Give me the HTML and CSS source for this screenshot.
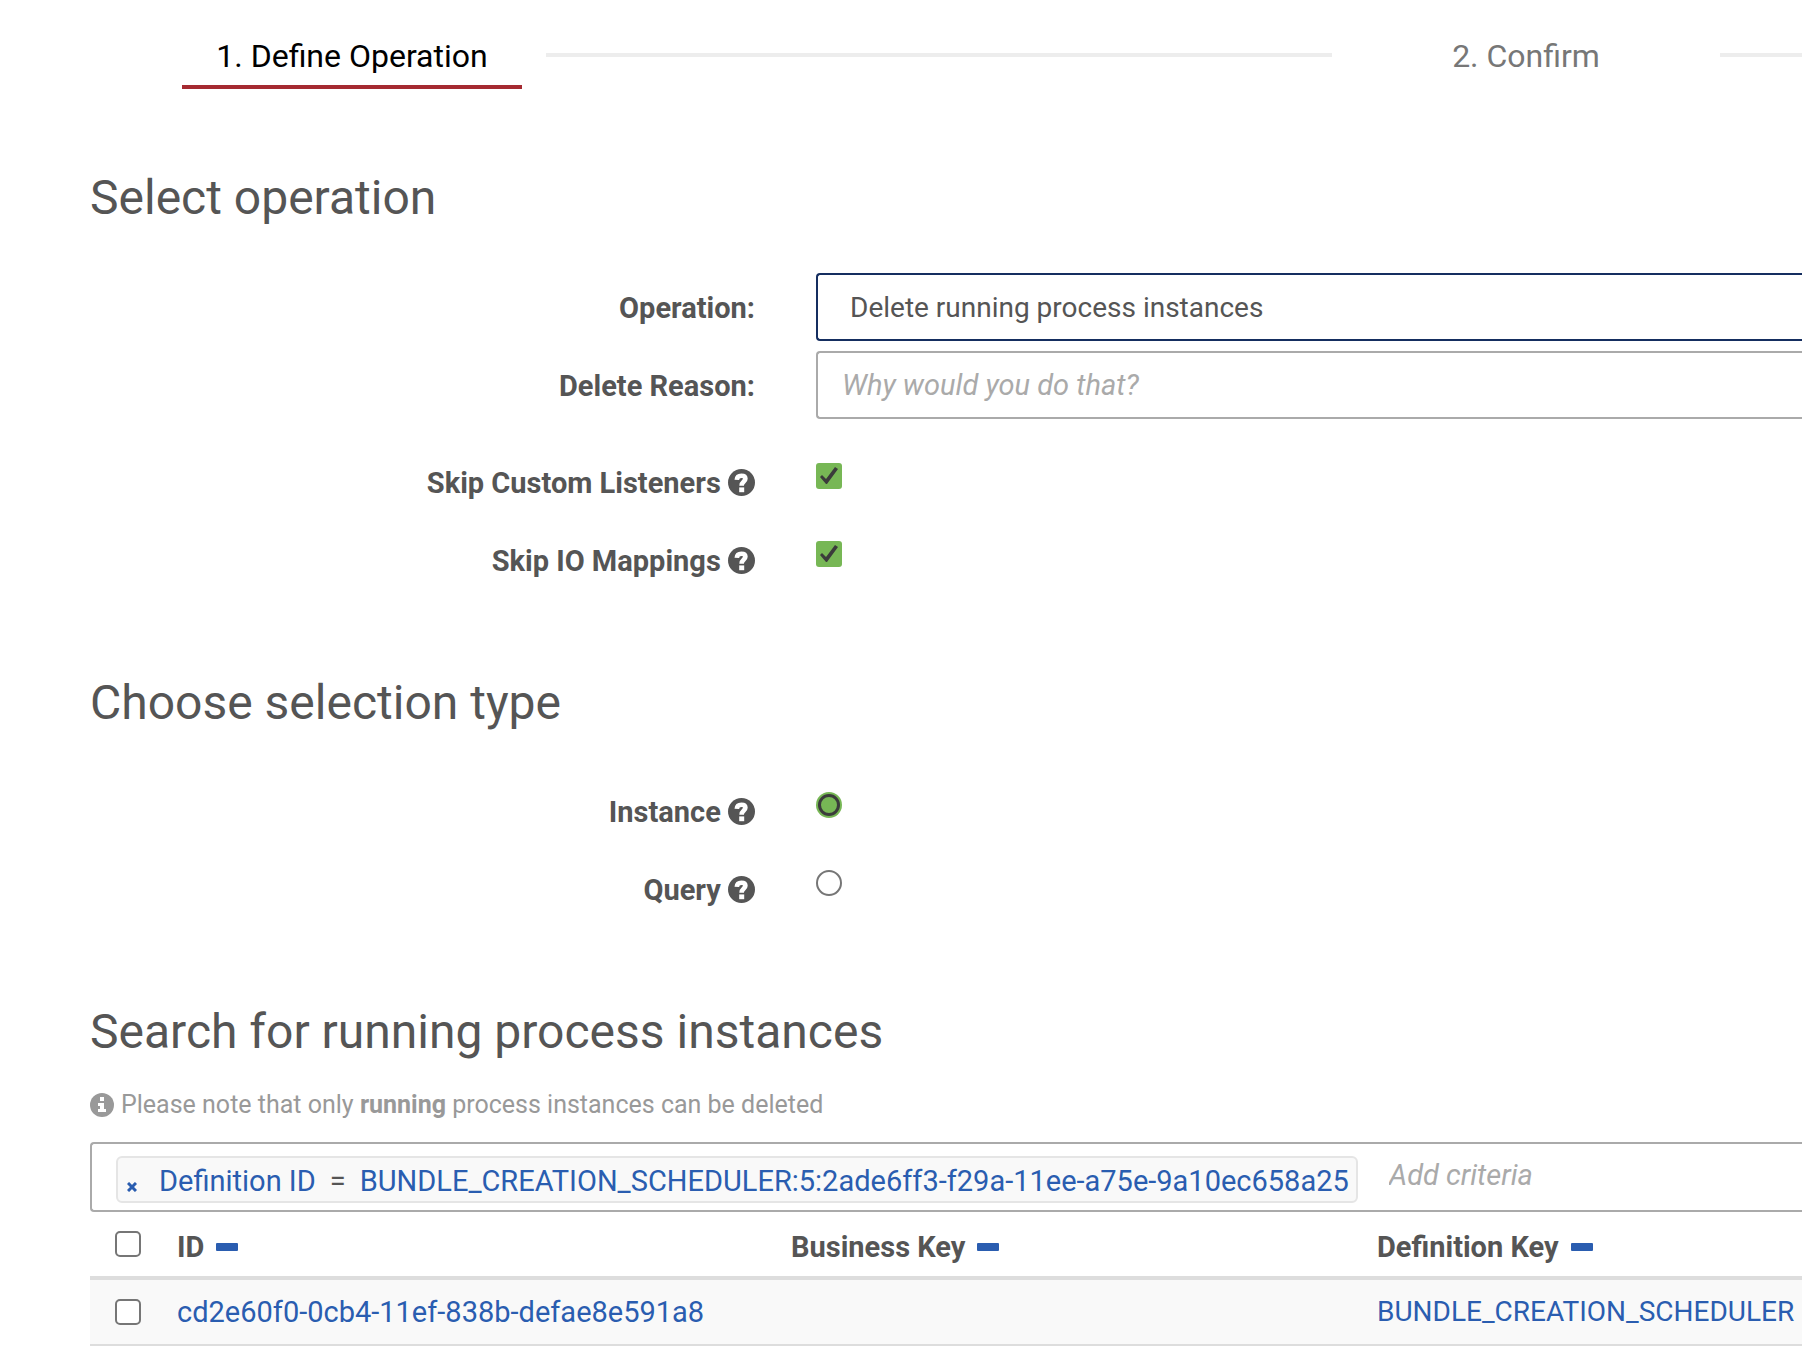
FILE: index.html
```html
<!DOCTYPE html>
<html lang="en">
<head>
<meta charset="utf-8">
<title>Batch Operation</title>
<link rel="stylesheet" href="styles.css">
</head>
<body>
<svg class="sprite" aria-hidden="true">
  <symbol id="icon-help" viewBox="0 0 27 27">
    <circle cx="13.5" cy="13.5" r="13.5" fill="currentColor"/>
    <path d="M8.8 10.8C9 7.8 11 6.8 13.4 6.8C16.2 6.8 17.4 8 17.4 9.8C17.4 12.6 13.6 12.6 13.6 16.8" fill="none" stroke="#fff" stroke-width="4.6"/>
    <rect x="11.2" y="18.4" width="5" height="4.8" fill="#fff"/>
  </symbol>
  <symbol id="icon-info" viewBox="0 0 24 24">
    <circle cx="12" cy="12" r="12" fill="currentColor"/>
    <path d="M10 4h4v4h-4zM8 10h6v6h2v3H8v-3h2v-3H8z" fill="#fff"/>
  </symbol>
  <symbol id="icon-minus" viewBox="0 0 22 8">
    <rect width="22" height="8" rx="1" fill="currentColor"/>
  </symbol>
</svg>

<nav class="steps" aria-label="Progress">
  <span class="step step-active" aria-current="step">1. Define Operation</span>
  <span class="step-line"></span>
  <span class="step">2. Confirm</span>
  <span class="step-line step-line-last"></span>
</nav>

<main class="content">
  <section class="section section-operation">
    <h1 class="heading">Select operation</h1>
    <div class="row">
      <label class="row-label" for="operation">Operation:</label>
      <select class="field field-select" id="operation"><option>Delete running process instances</option></select>
    </div>
    <div class="row">
      <label class="row-label" for="reason">Delete Reason:</label>
      <input class="field" id="reason" type="text" placeholder="Why would you do that?">
    </div>
    <div class="row row-toggle">
      <label class="row-label" for="skip-listeners">Skip Custom Listeners <svg class="help"><use href="#icon-help"/></svg></label>
      <input class="toggle check" id="skip-listeners" type="checkbox" checked>
    </div>
    <div class="row row-toggle">
      <label class="row-label" for="skip-io">Skip IO Mappings <svg class="help"><use href="#icon-help"/></svg></label>
      <input class="toggle check" id="skip-io" type="checkbox" checked>
    </div>
  </section>

  <section class="section">
    <h1 class="heading">Choose selection type</h1>
    <div class="row row-toggle">
      <label class="row-label" for="type-instance">Instance <svg class="help"><use href="#icon-help"/></svg></label>
      <input class="toggle radio" id="type-instance" name="type" type="radio" checked>
    </div>
    <div class="row row-toggle">
      <label class="row-label" for="type-query">Query <svg class="help"><use href="#icon-help"/></svg></label>
      <input class="toggle radio" id="type-query" name="type" type="radio">
    </div>
  </section>

  <section class="section">
    <h1 class="heading">Search for running process instances</h1>
    <p class="note"><svg class="info"><use href="#icon-info"/></svg><span>Please note that only <strong>running</strong> process instances can be deleted</span></p>
    <div class="search">
      <div class="pill">
        <button class="pill-remove" type="button" aria-label="Remove criteria"><svg class="cross" viewBox="0 0 10 10"><path d="M1 1l8 8M9 1l-8 8" stroke="currentColor" stroke-width="3"/></svg></button>
        <a class="pill-name" href="#">Definition ID</a>
        <span class="pill-operator">=</span>
        <a class="pill-value" href="#">BUNDLE_CREATION_SCHEDULER:5:2ade6ff3-f29a-11ee-a75e-9a10ec658a25</a>
      </div>
      <input class="search-input" type="text" placeholder="Add criteria" aria-label="Add criteria">
    </div>
    <table class="table">
      <thead>
        <tr>
          <th class="col-check"><input class="toggle check" type="checkbox" aria-label="Select all"></th>
          <th class="col-id">ID<a class="sort" href="#" aria-label="Sort by ID"><svg class="minus"><use href="#icon-minus"/></svg></a></th>
          <th class="col-business">Business Key<a class="sort" href="#" aria-label="Sort by Business Key"><svg class="minus"><use href="#icon-minus"/></svg></a></th>
          <th>Definition Key<a class="sort" href="#" aria-label="Sort by Definition Key"><svg class="minus"><use href="#icon-minus"/></svg></a></th>
        </tr>
      </thead>
      <tbody>
        <tr>
          <td class="col-check"><input class="toggle check" type="checkbox" aria-label="Select instance"></td>
          <td><a class="instance-id" href="#">cd2e60f0-0cb4-11ef-838b-defae8e591a8</a></td>
          <td></td>
          <td><a href="#">BUNDLE_CREATION_SCHEDULER</a></td>
        </tr>
      </tbody>
    </table>
  </section>
</main>
</body>
</html>
```
FILE: styles.css
```css
*, *::before { box-sizing: border-box; }

body {
  margin: 0;
  background: #fff;
  color: #555;
  font: 28px/40px Roboto, "Noto Sans", sans-serif;
  overflow-x: hidden;
}

a { color: #2a5db0; text-decoration: none; }

.sprite { display: none; }

/* Progress steps */
.steps {
  display: flex;
  align-items: flex-start;
  gap: 24px;
  padding: 33px 0 0 182px;
}
.step {
  flex: 0 0 340px;
  height: 56px;
  border-bottom: 4px solid transparent;
  color: #777;
  font-size: 32px;
  line-height: 46px;
  text-align: center;
}
.step-active { border-color: #a52a31; color: #000; }
.step-line { flex: 1; height: 4px; margin-top: 20px; background: #ededed; }
.step-line-last { flex: 0 0 82px; }

/* Form sections */
.content { padding-left: 90px; }
.section { padding-top: 85px; }
.heading { margin: 0 0 22px; font-size: 48px; font-weight: 400; line-height: 66px; }
.section-operation { padding-top: 76px; }
.section-operation .heading { margin-bottom: 42px; }

.row { display: flex; align-items: flex-start; gap: 61px; margin-bottom: 10px; }
.row-label {
  flex: 0 0 665px;
  padding-top: 15px;
  font-size: 29px;
  font-weight: 700;
  text-align: right;
}
.row-toggle { margin-bottom: 4px; padding-top: 34px; }
.row-toggle .row-label { padding-top: 0; }
.help { width: 27px; height: 27px; vertical-align: -3px; }

.field {
  flex: 1;
  min-width: 0;
  height: 68px;
  padding: 0 24px;
  border: 2px solid #aaa;
  border-right: 0;
  border-radius: 4px 0 0 4px;
  background: #fff;
  color: #555;
  font: inherit;
}
.field-select { appearance: none; padding-top: 2px; padding-left: 32px; border-color: #152e60; }
::placeholder { color: #aaa; font-size: 29px; font-style: italic; opacity: 1; }

/* Check boxes and radios */
.toggle {
  appearance: none;
  display: block;
  flex: none;
  width: 26px;
  height: 26px;
  margin: 0;
  border: 2px solid #767676;
  border-radius: 5px;
  background: #fff;
}
.toggle:checked { border: 0; background: #77b755; }
.toggle:checked::before { content: ""; display: block; }
.check:checked { border-radius: 3px; }
.check:checked::before {
  width: 26px;
  height: 26px;
  background: #3b3b3b;
  clip-path: polygon(4px 14px, 6px 12px, 10px 16px, 19px 4px, 22px 6px, 11px 21px, 10px 21px);
}
.radio, .radio:checked { border-radius: 50%; }
.radio:checked { padding: 2px; }
.radio:checked::before { width: 22px; height: 22px; border: 3px solid #3b3b3b; border-radius: 50%; }

/* Search */
.note { display: flex; align-items: center; gap: 7px; margin: 0 0 19px; color: #999; font-size: 25px; line-height: 36px; }
.info { width: 24px; height: 24px; }
.search {
  display: flex;
  align-items: flex-start;
  gap: 31px;
  height: 70px;
  padding: 12px 0 0 24px;
  border: 2px solid #aaa;
  border-right: 0;
  border-radius: 4px 0 0 4px;
}
.pill {
  display: flex;
  flex: none;
  align-items: center;
  height: 47px;
  padding: 3px 7px 0 9px;
  border: 2px solid #e5e5e5;
  border-radius: 6px;
  background: #f9f9f9;
  font-size: 29px;
}
.pill-remove { display: flex; width: 10px; margin-right: 22px; padding: 11px 0 0; border: 0; background: none; color: #2a5db0; }
.cross { width: 10px; height: 10px; }
.pill-operator { padding: 0 14px; }
.search-input { flex: 1; min-width: 0; height: 40px; padding: 0; border: 0; background: none; color: #555; font: inherit; }

.table { width: 100%; border-spacing: 0; table-layout: fixed; }
.table th { height: 68px; padding: 6px 0 0; border-bottom: 4px solid #ddd; font-size: 29px; text-align: left; }
.table td { height: 66px; padding: 0; border-bottom: 2px solid #ddd; background: #f9f9f9; }
.table .col-check { width: 87px; padding: 0 0 0 25px; }
.col-id { width: 614px; }
.col-business { width: 586px; }
.instance-id { font-size: 29px; }
.sort { margin-left: 12px; }
.minus { width: 22px; height: 8px; vertical-align: 6px; }
```
